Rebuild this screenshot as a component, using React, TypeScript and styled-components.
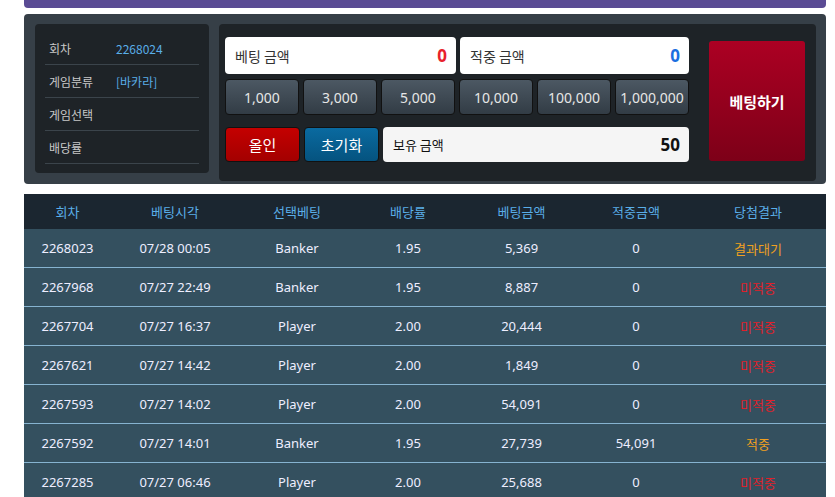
import React from "react";
import styled, { createGlobalStyle } from "styled-components";

const G = createGlobalStyle`
  body { margin: 0; background: #fff; font-family: "Noto Sans CJK KR", "Noto Sans", sans-serif; }
`;
const Wrap = styled.div`padding: 0 9px 0 24px; display: flex; flex-direction: column;`;
const TopBar = styled.div`height: 8px; background: #5a4b94; border-radius: 0 0 4px 4px;`;
const Panel = styled.div`margin-top: 6px; background: #363f47; border-radius: 4px; padding: 10px 10px 3px 11px; display: flex; gap: 10px; height: 157px;`;
const Info = styled.div`width: 174px; height: 149px; background: #1e2327; border-radius: 4px; padding: 8px 10px 0 10px; box-sizing: border-box;`;
const InfoRow = styled.div`display: flex; align-items: center; height: 32px; border-bottom: 1px solid #3b444b; font-size: 12px; color: #c8c8c8;`;
const InfoLabel = styled.div`width: 67px; padding-left: 4px;`;
const InfoVal = styled.div`color: #5aaee8;`;
const Main = styled.div`flex: 1; background: #1e2327; border-radius: 4px; padding: 13px 6px 0 6px; display: flex; gap: 20px;`;
const Col = styled.div`width: 464px; display: flex; flex-direction: column;`;
const Row = styled.div<{ $mt?: number }>`display: flex; gap: 4px; margin-top: ${p => p.$mt ?? 0}px;`;
const Field = styled.div<{ $w: number; $bg?: string }>`width: ${p => p.$w}px; height: 37px; background: ${p => p.$bg || "#fff"}; border-radius: 4px; display: flex; align-items: center; justify-content: space-between; padding: 0 9px 0 10px; box-sizing: border-box; font-size: 14px; color: #333;`;
const Num = styled.span<{ $c: string }>`color: ${p => p.$c}; font-weight: 700; font-size: 17px; font-family: "Noto Sans", sans-serif;`;
const Chip = styled.div`flex: 1; height: 34px; border: 1px solid #111; border-radius: 4px; background: linear-gradient(#4c5863, #323c45); color: #e6e6e6; font-size: 14px; display: flex; align-items: center; justify-content: center; font-family: "Noto Sans", sans-serif;`;
const Btn = styled.div<{ $bg: string }>`width: 75px; height: 35px; border-radius: 4px; border: 1px solid #111; background: ${p => p.$bg}; color: #fff; font-size: 15px; display: flex; align-items: center; justify-content: center; box-sizing: border-box;`;
const BetBtn = styled.div`margin-top: 4px; width: 96px; height: 120px; border-radius: 3px; background: linear-gradient(#ac0023, #7d0018); color: #fff; font-weight: 700; font-size: 15px; display: flex; align-items: center; justify-content: center;`;
const Table = styled.div`margin-top: 10px; font-size: 13px; font-family: "Noto Sans", "Noto Sans CJK KR", sans-serif;`;
const Grid = styled.div<{ $head?: boolean }>`display: grid; grid-template-columns: 87px 128px 116px 106px 121px 108px 136px; height: ${p => p.$head ? 35 : 38}px; background: ${p => p.$head ? "#1b2630" : "#34505f"}; border-bottom: ${p => p.$head ? "none" : "1px solid #86b3d0"}; color: ${p => p.$head ? "#5aaee8" : "#eef"}; align-items: center; text-align: center;`;
const Res = styled.span<{ $c: string }>`color: ${p => p.$c};`;

const rows = [
  ["2268023", "07/28 00:05", "Banker", "1.95", "5,369", "0", "결과대기"],
  ["2267968", "07/27 22:49", "Banker", "1.95", "8,887", "0", "미적중"],
  ["2267704", "07/27 16:37", "Player", "2.00", "20,444", "0", "미적중"],
  ["2267621", "07/27 14:42", "Player", "2.00", "1,849", "0", "미적중"],
  ["2267593", "07/27 14:02", "Player", "2.00", "54,091", "0", "미적중"],
  ["2267592", "07/27 14:01", "Banker", "1.95", "27,739", "54,091", "적중"],
  ["2267285", "07/27 06:46", "Player", "2.00", "25,688", "0", "미적중"],
];
const resColor = (r: string) => r === "미적중" ? "#e0202a" : "#f0a020";

export default function App() {
  return (
    <Wrap>
      <G />
      <TopBar />
      <Panel>
        <Info>
          <InfoRow><InfoLabel>회차</InfoLabel><InfoVal>2268024</InfoVal></InfoRow>
          <InfoRow><InfoLabel>게임분류</InfoLabel><InfoVal>[바카라]</InfoVal></InfoRow>
          <InfoRow><InfoLabel>게임선택</InfoLabel></InfoRow>
          <InfoRow><InfoLabel>배당률</InfoLabel></InfoRow>
        </Info>
        <Main>
          <Col>
            <Row>
              <Field $w={231}>베팅 금액<Num $c="#e8222c">0</Num></Field>
              <Field $w={229}>적중 금액<Num $c="#1a6fe0">0</Num></Field>
            </Row>
            <Row $mt={5}>
              {["1,000", "3,000", "5,000", "10,000", "100,000", "1,000,000"].map(c => <Chip key={c}>{c}</Chip>)}
            </Row>
            <Row $mt={12}>
              <Btn $bg="linear-gradient(#c40000,#a30000)">올인</Btn>
              <Btn $bg="linear-gradient(#0a6aa0,#05537f)">초기화</Btn>
              <Field $w={306} $bg="#f5f5f5" style={{ height: 35, fontSize: 13, color: "#111" }}>보유 금액<Num $c="#111">50</Num></Field>
            </Row>
          </Col>
          <BetBtn>베팅하기</BetBtn>
        </Main>
      </Panel>
      <Table>
        <Grid $head>{["회차", "베팅시각", "선택베팅", "배당률", "베팅금액", "적중금액", "당첨결과"].map(h => <div key={h}>{h}</div>)}</Grid>
        {rows.map(r => (
          <Grid key={r[0]}>
            {r.slice(0, 6).map((c, i) => <div key={i}>{c}</div>)}
            <div><Res $c={resColor(r[6])}>{r[6]}</Res></div>
          </Grid>
        ))}
      </Table>
    </Wrap>
  );
}
